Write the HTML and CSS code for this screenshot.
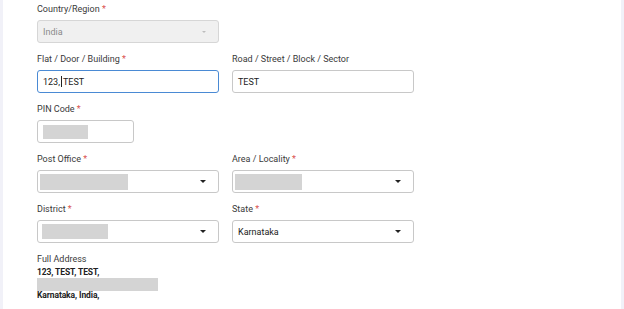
FILE: index.html
```html
<!DOCTYPE html>
<html lang="en">
<head>
    <meta charset="UTF-8">
    <meta name="viewport" content="width=device-width, initial-scale=1.0">
    <title>Address</title>
    <link rel="stylesheet" href="styles.css">
</head>
<body>
    <div class="frame">
        <form class="address-form">
            <div class="row">
                <div class="field">
                    <label>Country/Region <span class="req">*</span></label>
                    <div class="control select disabled">
                        <span class="value">India</span>
                        <span class="arrow"></span>
                    </div>
                </div>
            </div>
            <div class="row">
                <div class="field">
                    <label>Flat / Door / Building <span class="req">*</span></label>
                    <div class="control focused">
                        <span class="value">123,<span class="caret"></span>TEST</span>
                    </div>
                </div>
                <div class="field">
                    <label>Road / Street / Block / Sector</label>
                    <div class="control">
                        <span class="value">TEST</span>
                    </div>
                </div>
            </div>
            <div class="row">
                <div class="field">
                    <label>PIN Code <span class="req">*</span></label>
                    <div class="control short">
                        <span class="blur pin"></span>
                    </div>
                </div>
            </div>
            <div class="row">
                <div class="field">
                    <label>Post Office <span class="req">*</span></label>
                    <div class="control select tight">
                        <span class="blur post"></span>
                        <span class="arrow"></span>
                    </div>
                </div>
                <div class="field">
                    <label>Area / Locality <span class="req">*</span></label>
                    <div class="control select tight">
                        <span class="blur area"></span>
                        <span class="arrow"></span>
                    </div>
                </div>
            </div>
            <div class="row">
                <div class="field">
                    <label>District <span class="req">*</span></label>
                    <div class="control select tight">
                        <span class="blur district"></span>
                        <span class="arrow"></span>
                    </div>
                </div>
                <div class="field">
                    <label>State <span class="req">*</span></label>
                    <div class="control select">
                        <span class="value">Karnataka</span>
                        <span class="arrow"></span>
                    </div>
                </div>
            </div>
            <div class="full-address">
                <label>Full Address</label>
                <div class="lines">
                    <div>123, TEST, TEST,</div>
                    <div class="blur line"></div>
                    <div>Karnataka, India,</div>
                </div>
            </div>
        </form>
    </div>
</body>
</html>
```

FILE: styles.css
```css
body {
    margin: 0;
    background: #fff;
    font-family: Roboto, "Liberation Sans", Arial, sans-serif;
    color: #333;
}
.frame {
    height: 309px;
    border-left: 3px solid #f1f1f8;
    border-right: 3px solid #f1f1f8;
    overflow: hidden;
}
.address-form {
    padding: 4px 0 0 34px;
}
.row {
    display: grid;
    grid-template-columns: 182px 182px;
    column-gap: 13px;
    margin-bottom: 11px;
}
label {
    display: block;
    font-size: 9px;
    line-height: 11px;
    margin-bottom: 5px;
    color: #3a3a3a;
}
.req {
    color: #d9534f;
}
.control {
    box-sizing: border-box;
    height: 23px;
    border: 1px solid #c8c8c8;
    border-radius: 3px;
    background: #fff;
    display: flex;
    align-items: center;
    padding: 0 5px;
    font-size: 9px;
    color: #222;
}
.control.short {
    width: 97px;
}
.control.tight {
    padding-left: 2px;
}
.control.disabled {
    background: #f0f0f0;
    border-color: #d6d6d6;
}
.control.disabled .value {
    color: #8a8a8a;
}
.control.focused {
    border-color: #4a8ad4;
}
.value {
    flex: 1;
    white-space: pre;
}
.caret {
    display: inline-block;
    width: 1px;
    height: 11px;
    margin: 0 1px;
    background: #222;
    vertical-align: -2px;
}
.select .arrow {
    margin-left: auto;
    margin-right: 7px;
    width: 0;
    height: 0;
    border-left: 3px solid transparent;
    border-right: 3px solid transparent;
    border-top: 3px solid #222;
}
.disabled .arrow {
    border-left-width: 2.5px;
    border-right-width: 2.5px;
    border-top: 2px solid #bdbdbd;
}
.blur {
    display: inline-block;
    background: #d4d4d4;
}
.blur.pin {
    width: 45px;
    height: 14px;
}
.blur.post {
    width: 88px;
    height: 16px;
}
.blur.area {
    width: 67px;
    height: 16px;
}
.blur.district {
    width: 66px;
    height: 15px;
    margin-left: 2px;
}
.full-address {
    margin-top: 4px;
}
.full-address label {
    margin-bottom: 2px;
}
.lines {
    font-size: 8.5px;
    line-height: 11px;
    font-weight: bold;
    letter-spacing: -0.1px;
    color: #222;
}
.blur.line {
    display: block;
    width: 121px;
    height: 13px;
    margin-bottom: -1px;
}
```
